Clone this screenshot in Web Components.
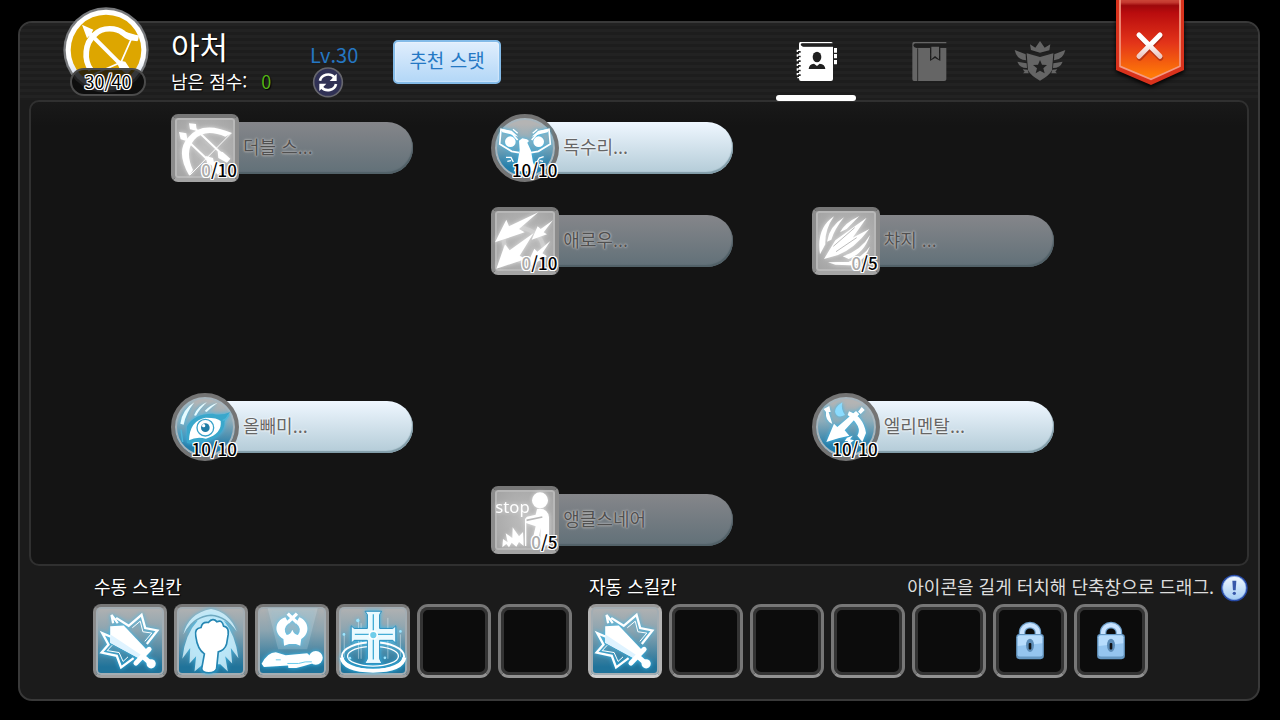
<!DOCTYPE html>
<html lang="ko">
<head>
<meta charset="utf-8">
<meta name="viewport" content="width=device-width, initial-scale=1">
<title>아처</title>
<style>
  body {
    margin: 0;
    background: #000;
    color: #fff;
    font-family: "Noto Sans CJK KR", "Noto Sans", sans-serif;
    font-size: 18px;
    line-height: 24px;
  }
</style>
</head>
<body>
<skill-window>
  <class-info slot="info" name="아처" count="30/40" points="0" level="Lv.30"></class-info>
  <nav-tabs slot="tabs"></nav-tabs>
  <ribbon-close slot="close"></ribbon-close>

  <skill-node slot="skill" style="grid-area: 1 / 1" icon="doubleBow" value="0" max="10" locked>더블 스...</skill-node>
  <skill-node slot="skill" style="grid-area: 1 / 2" icon="eagle" value="10" max="10" round>독수리...</skill-node>
  <skill-node slot="skill" style="grid-area: 2 / 2" icon="arrows" value="0" max="10" locked>애로우...</skill-node>
  <skill-node slot="skill" style="grid-area: 2 / 3" icon="charge" value="0" max="5" locked>챠지 ...</skill-node>
  <skill-node slot="skill" style="grid-area: 4 / 1" icon="owlEye" value="10" max="10" round>올빼미...</skill-node>
  <skill-node slot="skill" style="grid-area: 4 / 3" icon="elemental" value="10" max="10" round>엘리멘탈...</skill-node>
  <skill-node slot="skill" style="grid-area: 5 / 2" icon="snare" value="0" max="5" locked>앵클스네어</skill-node>

  <slot-group slot="bar" label="수동 스킬칸">
    <skill-slot icon="sword"></skill-slot>
    <skill-slot icon="fist"></skill-slot>
    <skill-slot icon="death"></skill-slot>
    <skill-slot icon="cross"></skill-slot>
    <skill-slot></skill-slot>
    <skill-slot></skill-slot>
  </slot-group>
  <slot-group slot="bar" label="자동 스킬칸" wide>
    <hint-note slot="note">아이콘을 길게 터치해 단축창으로 드래그.</hint-note>
    <skill-slot icon="sword" bright></skill-slot>
    <skill-slot></skill-slot>
    <skill-slot></skill-slot>
    <skill-slot></skill-slot>
    <skill-slot></skill-slot>
    <skill-slot icon="lock"></skill-slot>
    <skill-slot icon="lock"></skill-slot>
  </slot-group>
</skill-window>

<script>
// skill art is drawn on a 204 grid, slot art on a 224 grid
const SKILL_ICONS = {
  doubleBow: `
    <g fill="#fff" stroke="#fff">
      <path stroke="none" d="M55 185Q12 112 52 70Q92 18 183 57L163 68Q102 42 70 77Q40 112 66 168Z"/>
      <path fill="none" stroke-width="3" d="M180 58L57 183"/>
      <path fill="none" stroke-width="6" d="M35 66L140 166M68 40L165 132"/>
      <path stroke="none" d="M24 54L46 58L50 82L29 76ZM54 28L75 30L77 50L57 46ZM104 126L126 132L132 160L108 146ZM140 112L155 114L178 134L168 146L142 132ZM122 142L145 145L158 170L140 182L124 164Z"/>
    </g>`,
  eagle: `
    <g fill="#fff">
      <path fill="none" stroke="#fff" stroke-width="5" d="M80 78L60 55L30 46L26 90L62 112L84 116M122 78L142 55L174 46L178 90L142 112L120 116"/>
      <path d="M30 44L62 50L82 68L56 60L34 55ZM174 44L142 50L122 68L148 60L170 55Z"/>
      <circle cx="58" cy="83" r="16"/><circle cx="143" cy="83" r="16"/>
      <path d="M84 80L94 73L108 76L114 81L109 86L120 110L126 145L138 172H68L80 143L86 108Z"/>
      <path fill="none" stroke="#fff" stroke-width="4" d="M45 130L60 130L67 144M49 142L60 140M158 128L145 132L138 144M156 142L146 140M66 46L80 58M139 46L125 58"/>
    </g>`,
  arrows: `
    <path fill="none" stroke="#d4d4d4" stroke-width="13" opacity=".6" d="M36 80Q38 155 95 162M88 62Q148 72 157 120"/>
    <g fill="#fff">
      <path d="M12 106L46 38L54 58L142 16L84 66L101 76Z"/>
      <path d="M122 98L140 58L149 66L186 40L158 76L168 82Z"/>
      <path d="M16 185L42 112L56 130L128 78L86 146L104 156Z"/>
      <path d="M117 154L130 125L139 134L178 102L154 139L168 148L116 178Z"/>
    </g>`,
  charge: `
    <g fill="#fff">
      <path d="M36 156L70 100L164 32L122 92L172 66Q126 126 78 144Z"/>
      <path d="M24 142Q12 64 66 28Q38 68 40 112ZM45 104Q52 58 96 31Q68 66 58 98ZM84 76Q98 48 142 27L104 66Z"/>
      <path d="M92 148Q148 130 174 84Q157 138 110 156ZM110 164Q154 150 174 118Q160 160 124 172ZM48 166L112 164L155 176L70 173Z"/>
    </g>
    <path fill="none" stroke="#bdbdbd" stroke-width="3" d="M64 118L128 62M72 134L134 92"/>`,
  owlEye: `
    <path fill="#3aa7cb" d="M48 100Q68 62 125 62Q151 69 178 57Q158 78 160 96Q153 132 102 145Q74 153 48 150Z"/>
    <path fill="#fff" d="M54 142Q56 82 104 74Q140 74 149 84Q154 122 105 137Q76 130 54 142Z"/>
    <circle cx="103" cy="104" r="25" fill="none" stroke="#3aa3ca" stroke-width="4"/>
    <circle cx="103" cy="104" r="13" fill="#207da6"/><circle cx="98" cy="98" r="5" fill="#fff"/>
    <path fill="#e6fbff" d="M28 92Q34 49 70 28Q44 62 38 95ZM69 67Q80 39 108 27Q86 48 75 68ZM101 54Q115 37 140 29Q120 43 107 57Z"/>
    <path fill="none" stroke="#4cb6d8" stroke-width="4" d="M30 110L35 147M155 82Q166 80 174 64"/>`,
  elemental: `
    <path fill="#8bdcff" d="M91 28Q86 49 99 66Q75 78 69 56Q68 43 91 28Z"/>
    <g fill="#fff">
      <path d="M43 147L66 92L76 102L132 54L142 64L98 112L112 128L79 136Z"/>
      <path d="M138 56L149 42L158 51L146 63Z"/>
      <path d="M35 48L52 39L56 57L50 57L61 93Q39 83 42 57Z"/>
      <path d="M111 55Q154 70 162 120L151 147L136 128Q153 101 107 66Z"/>
      <path d="M105 134L122 128L114 139L126 142L105 158L108 145L98 144Z"/>
    </g>`,
  snare: `
    <text x="13" y="82" font-family="Noto Sans, sans-serif" font-size="50" fill="#fff">stop</text>
    <circle cx="147" cy="43" r="24" fill="#fff"/>
    <path fill="#fff" d="M138 69Q170 64 174 94V178H148L149 126L138 176H121L134 121L105 111Q99 98 108 92L134 86Z"/>
    <path fill="none" stroke="#b9b9b9" stroke-width="5" d="M106 103L154 93"/>
    <path fill="#fff" d="M34 184L36 159L50 169L44 142L64 156L65 124L84 151L96 138L98 180L84 168L76 182L62 170L54 184L46 174Z"/>
    <path stroke="#fff" stroke-width="4" d="M104 98V180"/>`
};

const SLOT_ICONS = {
  sword: `
    <path fill="none" stroke="#fff" stroke-width="7" d="M75 58L56 33L61 58M70 42L108 66L147 33L158 73L195 80L163 121M54 99L28 88L47 123L26 147L72 157L85 192L123 164"/>
    <path fill="none" stroke="#fff" stroke-width="3" d="M119 72L143 52L151 84L178 88L157 113M58 125L43 141L79 147L91 174L106 160"/>
    <path fill="#fff" d="M52 67L93 65L162 138L140 165L52 117Z"/>
    <path fill="#dff3ff" d="M53 92L146 154L140 165L52 117Z"/>
    <path stroke="#fff" stroke-width="15" stroke-linecap="round" d="M130 179L170 137M150 158L176 181"/>
    <circle cx="176" cy="181" r="14" fill="#fff"/>`,
  fist: `
    <path fill="#e6f8ff" opacity=".75" d="M112 15Q44 28 28 92Q47 57 72 50Q33 92 25 166L49 133L47 180L67 158L62 204L88 182H140L163 204L155 158L176 180L172 133L195 164Q186 93 151 51Q177 63 190 83Q167 24 112 15Z"/>
    <path fill="none" stroke="#6fa9c0" stroke-width="5" d="M38 82Q62 38 112 34Q160 38 184 82"/>
    <path fill="#fff" stroke="#2586b2" stroke-width="5" d="M66 98Q61 73 82 71Q85 53 104 56Q118 40 130 54Q146 46 150 67Q167 70 164 92L159 122Q153 140 134 145L129 195Q126 208 105 208Q84 208 84 195L92 151Q71 137 66 98Z"/>`,
  death: `
    <path fill="#fff" opacity=".16" d="M38 12H190L158 137H70Z"/>
    <path fill="#fff" d="M92 40C56 52 58 91 86 106L88 126L103 121H124L137 126L140 106C167 91 165 52 134 40L124 58Q144 74 130 94Q118 92 113 78Q108 92 96 94Q82 74 102 58Z"/>
    <path fill="none" stroke="#fff" stroke-width="10" d="M99 29L127 56M127 29L99 56"/>
    <path fill="#fff" d="M20 181Q38 146 63 146L93 155L158 149L170 160L173 180Q151 187 125 194H101L100 186L27 191Z"/>
    <circle cx="184" cy="163" r="21" fill="#fff"/>
    <path fill="none" stroke="#69caeb" stroke-width="3" d="M98 180H132Q152 173 172 175M63 169H78"/>`,
  cross: `
    <path stroke="#fff" stroke-width="2" opacity=".6" d="M25 90V163M68 44V166M76 58V166M157 42V166M195 92V160"/>
    <ellipse cx="112" cy="158" rx="94" ry="42" fill="none" stroke="#fff" stroke-width="6"/>
    <ellipse cx="112" cy="158" rx="77" ry="30" fill="none" stroke="#fff" stroke-width="4"/>
    <path fill="none" stroke="#fff" stroke-width="12" d="M17 162Q24 202 112 202Q200 202 207 162"/>
    <path fill="#eafaff" stroke="#2a8ebc" stroke-width="3" d="M88 22H138L132 32V74H172L181 66V119L172 110H132V166L139 180H87L95 166V110H55L46 119V66L55 74H95V32Z"/>
    <path fill="none" stroke="#43add6" stroke-width="4" d="M113 31V168M57 92H172"/>
    <circle cx="113" cy="94" r="12" fill="#70cdea" stroke="#fff" stroke-width="5"/>
    <g fill="#9ce5ff"><circle cx="66" cy="50" r="5"/><circle cx="24" cy="92" r="4"/><circle cx="195" cy="83" r="4"/><circle cx="42" cy="164" r="4"/><circle cx="148" cy="163" r="4"/></g>`,
  lock: `
    <path fill="none" stroke="#6d9fca" stroke-width="20" d="M88 106V86A24 22 0 0 1 136 86V106"/>
    <path fill="none" stroke="#c8e3ff" stroke-width="13" d="M88 106V86A24 22 0 0 1 136 86V106"/>
    <rect x="70" y="91" width="84" height="76" rx="10" fill="#6698c3"/>
    <rect x="74" y="94" width="76" height="65" rx="7" fill="#95c5ef"/>
    <path fill="#b7dcfc" d="M75 101Q75 95 82 95H142Q149 95 149 101V119L75 127Z"/>
    <ellipse cx="112" cy="125" rx="12" ry="20" fill="#5c8cb7"/>
    <rect x="108" y="118" width="8" height="20" rx="3" fill="#111"/>`
};

class SkillWindow extends HTMLElement {
  connectedCallback() {
    this.attachShadow({ mode: 'open' });
    this.shadowRoot.innerHTML = `
      <style>
        :host { display: flex; min-height: 100vh; box-sizing: border-box; padding: 21px 20px 19px 18px; }
        main {
          flex: 1;
          display: flex; flex-direction: column;
          padding: 0 9px;
          border: 2px solid #393939;
          border-radius: 14px;
          background: #1b1b1b;
        }
        header {
          display: flex; align-items: flex-start;
          height: 77px;
          background: repeating-linear-gradient(#222 0 3px, #1d1d1d 3px 6px);
          margin: 0 -9px; padding: 0 74px 0 43px;
          border-radius: 12px 12px 0 0;
        }
        ::slotted([slot="tabs"]) { margin-left: auto; }
        ::slotted([slot="close"]) { margin-left: 20px; }
        .board {
          display: grid;
          grid-template-columns: repeat(3, 1fr);
          grid-template-rows: repeat(5, 68px);
          row-gap: 25px;
          padding: 12px 115px 10px 140px;
          border: 2px solid #303030;
          border-radius: 10px;
          background: linear-gradient(#191919, #141414 24px);
        }
        footer { display: flex; gap: 16px; padding: 8px 0 20px 64px; }
      </style>
      <main>
        <header>
          <slot name="info"></slot>
          <slot name="tabs"></slot>
          <slot name="close"></slot>
        </header>
        <section class="board"><slot name="skill"></slot></section>
        <footer><slot name="bar"></slot></footer>
      </main>
    `;
  }
}
customElements.define('skill-window', SkillWindow);

class ClassInfo extends HTMLElement {
  connectedCallback() {
    const get = (key) => this.getAttribute(key);
    this.attachShadow({ mode: 'open' });
    this.shadowRoot.innerHTML = `
      <style>
        :host { display: flex; align-items: flex-start; }
        .avatar { position: relative; width: 86px; height: 86px; margin-top: -16px; }
        .avatar svg { display: block; }
        .count {
          position: absolute; left: 7px; bottom: -3px;
          width: 72px; height: 24px;
          border: 2px solid #4b4b4b; border-radius: 14px;
          background: rgba(10, 10, 10, 0.8);
          color: #000; text-align: center; line-height: 22px;
          text-shadow: 1px 0 #fff, -1px 0 #fff, 0 1px #fff, 0 -1px #fff, 1px 1px #fff, -1px -1px #fff, 1px -1px #fff, -1px 1px #fff, 0 0 2px #fff;
        }
        .text { width: 139px; margin: 5px 0 0 22px; text-shadow: 1px 1px 1px #000; }
        h1 { margin: 0; font-size: 31px; line-height: 36px; font-weight: 400; }
        p { margin: 5px 0 0; }
        .points { color: #52b415; margin-left: 9px; }
        .level { width: 50px; margin-top: 20px; color: #2577c3; font-size: 20px; }
        .level span { display: block; }
        .level button { display: block; margin-left: 2px; padding: 0; border: 0; background: none; height: 32px; }
        .level svg { display: block; }
        .stat {
          width: 108px; height: 44px; margin: 17px 0 0 33px; padding: 0 0 4px;
          border: 2px solid #84bbe8; border-radius: 5px;
          background: linear-gradient(#e0eefd, #b3d7f7);
          box-shadow: inset 0 0 2px #fff;
          color: #2478c4; font: inherit; font-size: 19px; white-space: nowrap;
        }
      </style>
      <div class="avatar">
        <svg width="86" height="86" viewBox="0 0 258 258">
          <defs><linearGradient id="rim" x2="0" y2="1"><stop offset=".6" stop-color="#fff"/><stop offset="1" stop-color="#b9c8e0"/></linearGradient></defs>
          <circle cx="129" cy="129" r="128" fill="#77797c"/>
          <circle cx="129" cy="129" r="121" fill="url(#rim)"/>
          <circle cx="129" cy="129" r="106" fill="#dda600"/>
          <path fill="none" stroke="#fff" stroke-width="17" d="M84 189C61 158 66 108 94 84C119 57 162 63 180 78C195 92 207 92 224 94"/>
          <path fill="#fff" d="M180 73L228 86L225 101L194 96Z"/>
          <path fill="none" stroke="#fff" stroke-width="5" d="M204 98L174 166L92 202"/>
          <path stroke="#fff" stroke-width="12" d="M76 75L188 187"/>
          <path fill="#fff" d="M57 53L91 68L84 81L72 94ZM158 158L187 164L204 190L192 202L170 185Z"/>
        </svg>
        <div class="count">${get('count')}</div>
      </div>
      <div class="text">
        <h1>${get('name')}</h1>
        <p>남은 점수: <span class="points">${get('points')}</span></p>
      </div>
      <div class="level">
        <span>${get('level')}</span>
        <button aria-label="초기화">
          <svg width="32" height="32" viewBox="0 0 96 96">
            <circle cx="48" cy="46" r="43" fill="#303155" stroke="#66666d" stroke-width="5"/>
            <path fill="none" stroke="#fff" stroke-width="8" d="M24 41C28 22 54 16 67 31M72 51C68 70 42 76 29 61"/>
            <path fill="#fff" d="M74 20V42H53ZM22 72V50H43Z"/>
          </svg>
        </button>
      </div>
      <button class="stat">추천 스탯</button>
    `;
  }
}
customElements.define('class-info', ClassInfo);

class NavTabs extends HTMLElement {
  connectedCallback() {
    this.attachShadow({ mode: 'open' });
    this.shadowRoot.innerHTML = `
      <style>
        :host { display: block; position: relative; z-index: 1; }
        nav { display: flex; }
        button {
          display: flex; flex-direction: column; align-items: center; justify-content: space-between;
          width: 112px; height: 78px; padding: 17px 0 0;
          border: 0; background: none; color: #656565;
        }
        button::after { content: ""; width: 80px; height: 6px; border-radius: 3px; }
        button.active { color: #fff; }
        button.active::after { background: #fff; }
      </style>
      <nav>
        <button class="active" aria-label="직업 스킬">
          <svg width="42" height="42" viewBox="-4 0 126 126" fill="currentColor">
            <path d="M12 6H103Q109 6 109 10H18Q13 11 13 15L19 19H110V117Q110 123 104 123H14Q8 123 8 117V12Q8 6 12 6Z"/>
            <path fill="#202020" d="M14 11H110V20H22Q14 19 14 11Z"/>
            <path fill="none" stroke="#202020" stroke-width="10" stroke-dasharray="6 8" d="M8 32V114"/>
            <path fill="none" stroke="currentColor" stroke-width="4" d="M15 31H3V36M15 45H3V50M15 59H3V64M15 73H3V78M15 87H3V92M15 101H3V106M15 113H3"/>
            <path d="M113 24H122V38H113ZM113 42H122V55H113ZM113 60H122V73H113Z"/>
            <ellipse cx="62" cy="51" rx="13" ry="16" fill="#202020"/>
            <path fill="#202020" d="M37 87Q38 72 53 71L62 78L70 71Q86 72 87 87Z"/>
          </svg>
        </button>
        <button aria-label="스킬북">
          <svg width="42" height="42" viewBox="-2 0 126 126" fill="currentColor">
            <path d="M18 6H116V10H23Q17 11 17 17Q19 23 26 24H67V63L82 54L98 63V24H116V118Q116 123 110 123H19Q14 123 14 117V12Q14 6 18 6Z"/>
            <path d="M71 20H94V58L82 48L71 58Z"/>
            <path stroke="#292929" stroke-width="3" d="M30 25V123"/>
          </svg>
        </button>
        <button aria-label="칭호">
          <svg width="52" height="42" viewBox="0 0 156 126" fill="currentColor">
            <path d="M51 30L48 13L64 23L78 3L92 23L109 13L106 31L78 38Z"/>
            <path d="M38 40L78 51L118 40L114 91Q105 108 78 122Q51 108 42 91Z"/>
            <path d="M2 30L35 43L36 61Q8 59 2 30ZM10 65L38 70L39 84Q17 84 10 65ZM26 88L41 89L44 100H27L32 95ZM154 30L121 43L120 61Q148 59 154 30ZM146 65L118 70L117 84Q139 84 146 65ZM130 88L115 89L112 100H129L124 95Z"/>
            <path fill="#202020" d="M78 60L84 74L99 75L88 85L92 100L78 92L65 100L69 85L57 75L72 74Z"/>
          </svg>
        </button>
      </nav>
    `;
    const buttons = this.shadowRoot.querySelectorAll('button');
    buttons.forEach(b => b.addEventListener('click', () => {
      buttons.forEach(o => o.classList.toggle('active', o === b));
    }));
  }
}
customElements.define('nav-tabs', NavTabs);

class RibbonClose extends HTMLElement {
  connectedCallback() {
    this.attachShadow({ mode: 'open' });
    this.shadowRoot.innerHTML = `
      <style>
        :host { display: block; margin-top: -23px; }
        button { display: block; padding: 0; border: 0; background: none; }
        svg { display: block; filter: drop-shadow(0 2px 2px #000); }
      </style>
      <button aria-label="닫기">
        <svg width="68" height="85" viewBox="0 0 204 255">
          <defs>
            <linearGradient id="red" x2="0" y2="1">
              <stop offset="0" stop-color="#d14d3d"/><stop offset=".05" stop-color="#c43930"/>
              <stop offset=".09" stop-color="#9d080b"/><stop offset=".18" stop-color="#b90c0e"/>
              <stop offset=".55" stop-color="#e33419"/><stop offset=".95" stop-color="#ff7a08"/>
            </linearGradient>
            <linearGradient id="mark" x2="0" y2="1"><stop offset=".4" stop-color="#fff"/><stop offset="1" stop-color="#ecc8c2"/></linearGradient>
          </defs>
          <path fill="#d9321c" d="M0 0H204V210L105 255L0 210Z"/>
          <path fill="url(#red)" stroke="#f49a83" stroke-width="5" d="M12 -5H192V199L105 238L12 199Z"/>
          <path fill="none" stroke="#8e1b10" stroke-opacity=".5" stroke-width="17" stroke-linecap="round" d="M71 109L133 174M133 109L71 174"/>
          <path fill="none" stroke="url(#mark)" stroke-width="15" stroke-linecap="round" d="M69 105L132 169M132 105L69 169"/>
        </svg>
      </button>
    `;
  }
}
customElements.define('ribbon-close', RibbonClose);

class SkillNode extends HTMLElement {
  connectedCallback() {
    const value = this.getAttribute('value');
    this.attachShadow({ mode: 'open' });
    this.shadowRoot.innerHTML = `
      <style>
        :host { display: block; width: 242px; }
        button {
          display: flex; align-items: center;
          width: 100%; height: 68px; padding: 0;
          border: 0; background: none;
          font: inherit; text-align: left;
        }
        .art {
          position: relative; z-index: 1; flex: none;
          box-sizing: border-box; width: 68px; height: 68px;
          border: 4px solid #7d7d7d; border-color: #777 #8c8c8c #a4a4a4; border-radius: 7px;
          background: radial-gradient(#bebebe, #a2a2a2);
          box-shadow: inset 0 0 0 2px #b8b8b8;
        }
        .art svg { position: absolute; left: -4px; top: -4px; filter: drop-shadow(0 0 2px #ddd); }
        :host([round]) .art {
          border-color: #747474; border-radius: 50%;
          background: linear-gradient(#b4b4b4 10%, #8eacb9 40%, #247eaa 82%);
          box-shadow: inset 0 0 0 2px #a8b6be;
        }
        :host([round]) svg { filter: drop-shadow(0 0 2px #35baf0); }
        .count {
          position: absolute; right: -2px; bottom: -4px;
          color: #000; font-size: 17px; font-weight: 500;
          text-shadow: 1px 0 #fff, -1px 0 #fff, 0 1px #fff, 0 -1px #fff, 1px 1px #fff, -1px -1px #fff, 1px -1px #fff, -1px 1px #fff;
        }
        .zero { color: #aaa; }
        .name {
          flex: 1; box-sizing: border-box; height: 52px;
          margin-left: -34px; padding-left: 38px;
          border-radius: 0 26px 26px 0;
          background: linear-gradient(#eff7ff, #b3cbd7);
          box-shadow: inset -1px -2px 1px #819ca8;
          color: #666; font-size: 18px; line-height: 48px; white-space: nowrap;
          text-shadow: 0 0 2px #fff, 0 0 3px #fff;
        }
        :host([locked]) .name {
          background: linear-gradient(#85868a, #617078);
          box-shadow: inset -1px -2px 1px #526168;
          color: #505050;
          text-shadow: 0 0 1px #bbb, 0 0 2px #bbb, 0 0 3px #bbb;
        }
      </style>
      <button>
        <span class="art">
          <svg width="68" height="68" viewBox="0 0 204 204">${SKILL_ICONS[this.getAttribute('icon')]}</svg>
          <span class="count"><span class="${value === '0' ? 'zero' : ''}">${value}</span>/${this.getAttribute('max')}</span>
        </span>
        <span class="name"><slot></slot></span>
      </button>
    `;
  }
}
customElements.define('skill-node', SkillNode);

class SlotGroup extends HTMLElement {
  connectedCallback() {
    this.attachShadow({ mode: 'open' });
    this.shadowRoot.innerHTML = `
      <style>
        :host { display: block; }
        :host([wide]) { flex: 1; }
        .head { display: flex; justify-content: space-between; height: 28px; margin-bottom: 2px; }
        h2 { margin: 0; padding-left: 1px; font-size: 18px; line-height: 24px; font-weight: 400; text-shadow: 1px 1px 1px #000; }
        .slots { display: flex; gap: 7px; }
      </style>
      <div class="head">
        <h2>${this.getAttribute('label')}</h2>
        <slot name="note"></slot>
      </div>
      <div class="slots"><slot></slot></div>
    `;
  }
}
customElements.define('slot-group', SlotGroup);

class HintNote extends HTMLElement {
  connectedCallback() {
    this.attachShadow({ mode: 'open' });
    this.shadowRoot.innerHTML = `
      <style>
        :host { display: flex; align-items: flex-start; gap: 7px; color: #ddd; font-size: 18px; white-space: nowrap; }
        svg { display: block; flex: none; }
      </style>
      <span><slot></slot></span>
      <svg width="28" height="28" viewBox="0 0 84 84">
        <defs><linearGradient id="disc" x2="0" y2="1"><stop offset="0" stop-color="#f0f7ff"/><stop offset="1" stop-color="#a5cdf4"/></linearGradient></defs>
        <circle cx="40" cy="42" r="40" fill="#2649a5"/>
        <circle cx="40" cy="42" r="35" fill="url(#disc)" stroke="#80a8e7" stroke-width="2"/>
        <path fill="#3757aa" d="M34 20H46L44 49H36Z"/><circle cx="40" cy="58" r="5" fill="#3757aa"/>
      </svg>
    `;
  }
}
customElements.define('hint-note', HintNote);

class SkillSlot extends HTMLElement {
  connectedCallback() {
    const icon = this.getAttribute('icon');
    const filled = icon && icon !== 'lock';
    this.attachShadow({ mode: 'open' });
    this.shadowRoot.innerHTML = `
      <style>
        :host { display: block; }
        button {
          display: block; box-sizing: border-box;
          width: 74px; height: 74px; padding: 0;
          border: 3px solid #777; border-bottom-color: #929292; border-radius: 11px;
          background: #0c0c0c;
          box-shadow: inset 0 0 0 3px #343434;
        }
        button.filled {
          border-color: #777 #8a8a8a #a0a0a0; border-radius: 8px;
          background: linear-gradient(#b2b2b2, #8ba4b0 35%, #20739a 88%);
          box-shadow: inset 0 0 0 2px #a3adb3;
        }
        :host([bright]) button.filled { border-color: #999 #b4b4b4 #d0d0d0; }
        svg { display: block; margin: -3px; }
        .filled svg { filter: drop-shadow(0 0 2px #37bcf0); }
      </style>
      <button class="${filled ? 'filled' : ''}">
        ${icon ? `<svg width="74" height="74" viewBox="0 0 224 224">${SLOT_ICONS[icon]}</svg>` : ''}
      </button>
    `;
  }
}
customElements.define('skill-slot', SkillSlot);
</script>
</body>
</html>
